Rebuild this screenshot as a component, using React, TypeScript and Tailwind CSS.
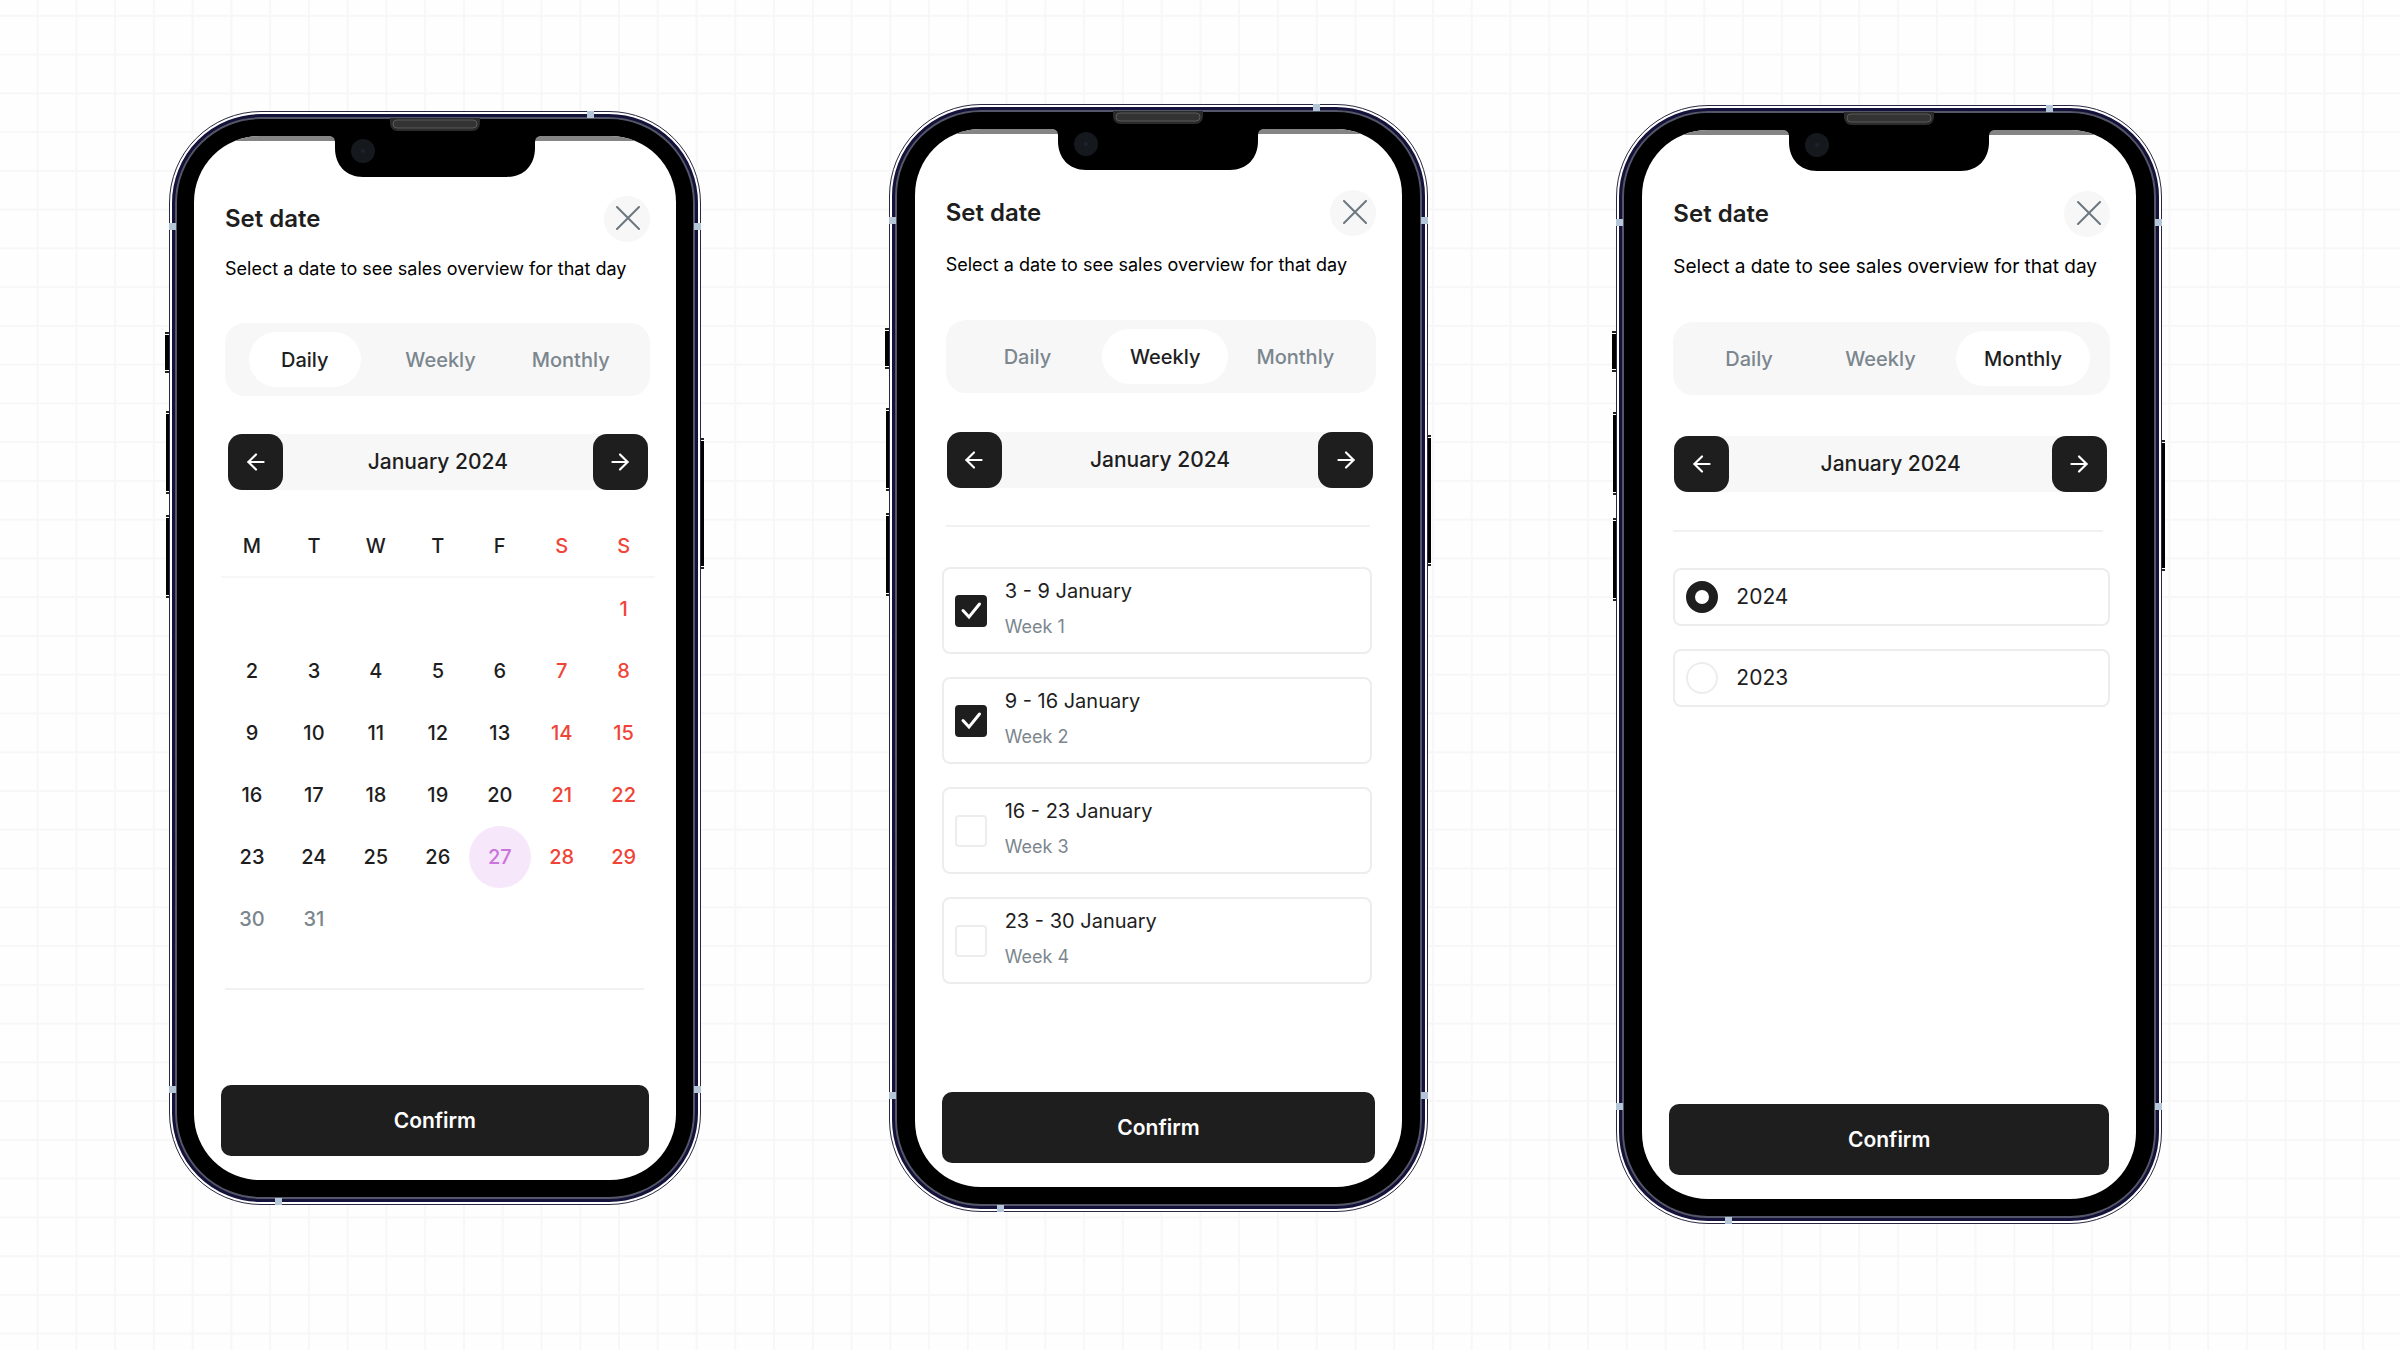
import React, { useState } from "react";
import { ArrowLeft, ArrowRight } from "lucide-react";

type Mode = "Daily" | "Weekly" | "Monthly";

const modes: Mode[] = ["Daily", "Weekly", "Monthly"];

const weekRows: (number | null)[][] = [
  [null, null, null, null, null, null, 1],
  [2, 3, 4, 5, 6, 7, 8],
  [9, 10, 11, 12, 13, 14, 15],
  [16, 17, 18, 19, 20, 21, 22],
  [23, 24, 25, 26, 27, 28, 29],
  [30, 31, null, null, null, null, null],
];

const weekDays = [
  ["M", "Monday"],
  ["T", "Tuesday"],
  ["W", "Wednesday"],
  ["T", "Thursday"],
  ["F", "Friday"],
  ["S", "Saturday"],
  ["S", "Sunday"],
];

const weeks = [
  { range: "3 - 9 January", label: "Week 1", picked: true },
  { range: "9 - 16 January", label: "Week 2", picked: true },
  { range: "16 - 23 January", label: "Week 3", picked: false },
  { range: "23 - 30 January", label: "Week 4", picked: false },
];

function GridPaper() {
  return (
    <svg className="absolute inset-0 -z-10 h-full w-full" aria-hidden="true">
      <defs>
        <pattern id="grid-paper" x="36.6" y="14.8" width="38.76" height="38.76" patternUnits="userSpaceOnUse">
          <path d="M1 0V38.76M0 1H38.76" stroke="#f7f7f7" strokeWidth="2" fill="none" />
        </pattern>
      </defs>
      <rect width="100%" height="100%" fill="url(#grid-paper)" />
    </svg>
  );
}

function SideKey({ className }: { className: string }) {
  return (
    <span aria-hidden="true" className={`absolute flex w-1 border-y-2 border-[#222] bg-white py-px ${className}`}>
      <span className="flex-1 bg-black" />
    </span>
  );
}

function AntennaBand({ className }: { className: string }) {
  return <span aria-hidden="true" className={`absolute h-[7px] w-[7px] bg-[#b4c6d8] ${className}`} />;
}

function Notch() {
  return (
    <div aria-hidden="true" className="absolute inset-x-0 top-0">
      <div className="h-[70px] overflow-hidden rounded-t-[66px]">
        <div className="h-[5px] bg-[#858585]" />
      </div>
      <svg viewBox="0 0 212 42" className="absolute left-1/2 top-0 h-[42px] w-[212px] -translate-x-1/2">
        <path d="M0 0C4 0 6 2 6 7V12C6 29 17 41 34 41H178C195 41 206 29 206 12V7C206 2 208 0 212 0Z" fill="#000" />
        <circle cx="34" cy="15" r="12" fill="#15191d" />
        <circle cx="34" cy="15" r="2" fill="#1d2430" />
      </svg>
      <svg viewBox="0 0 90 14" className="absolute -top-[18px] left-1/2 h-[14px] w-[90px] -translate-x-1/2">
        <path d="M0 0H90V4C90 10 87 13 82 13H8C3 13 0 10 0 4Z" fill="#2b2b2b" />
        <rect x="3" y="2" width="84" height="8" rx="4" fill="#333" stroke="#5a5a5a" />
      </svg>
    </div>
  );
}

type FrameProps = { className: string; bezel: string; screen: string; children: React.ReactNode };

function PhoneFrame({ className, bezel, screen, children }: FrameProps) {
  return (
    <section className={`relative flex ${className}`}>
      <SideKey className="-left-1 top-[20.2%] h-[41px]" />
      <SideKey className="-left-[3px] top-[27.4%] h-[83px]" />
      <SideKey className="-left-[3px] top-[36.9%] h-[83px]" />
      <SideKey className="-right-[3px] top-[29.9%] h-[131px]" />
      <div className="relative flex flex-1 rounded-[92px] border border-[#2a2840] bg-white p-[2px]">
        <div className="flex flex-1 rounded-[89px] border-[3px] border-[#14123a] bg-black">
          <div className={`flex flex-1 rounded-[86px] border-2 border-[#54566a] bg-black py-[17px] ${bezel}`}>
            <div className={`relative flex flex-1 flex-col rounded-[66px] bg-white pb-6 ${screen}`}>
              <Notch />
              {children}
            </div>
          </div>
        </div>
      </div>
      <AntennaBand className="right-[20%] top-0" />
      <AntennaBand className="left-0 top-[10.2%]" />
      <AntennaBand className="right-0 top-[10.2%]" />
      <AntennaBand className="bottom-[10.2%] left-0" />
      <AntennaBand className="bottom-[10.2%] right-0" />
      <AntennaBand className="bottom-0 left-[20%]" />
    </section>
  );
}

function Tabs({ initial, className }: { initial: Mode; className: string }) {
  const [active, setActive] = useState<Mode>(initial);
  return (
    <div role="tablist" className={`flex h-[73px] items-center justify-between rounded-[20px] bg-[#f7f7f7] ${className}`}>
      {modes.map((mode) => (
        <button
          key={mode}
          type="button"
          role="tab"
          aria-selected={active === mode}
          onClick={() => setActive(mode)}
          className={`h-[55px] rounded-full text-[20px] font-medium ${mode === "Daily" ? "px-8" : "px-7"} ${
            mode === "Daily" && initial !== "Monthly" ? "mr-auto" : ""
          } ${active === mode ? "bg-white text-[#1e1e1e]" : "text-[#7b868e]"}`}
        >
          {mode}
        </button>
      ))}
    </div>
  );
}

function MonthNav({ className }: { className: string }) {
  const key = "flex h-14 w-[55px] items-center justify-center rounded-[14px] bg-[#1e1e1e] text-white";
  return (
    <div className={`flex items-center justify-between rounded-[14px] bg-[#f7f7f7] ${className}`}>
      <button type="button" aria-label="Previous month" className={key}>
        <ArrowLeft size={26} strokeWidth={2} />
      </button>
      <span className="text-[21px] font-medium">January 2024</span>
      <button type="button" aria-label="Next month" className={key}>
        <ArrowRight size={26} strokeWidth={2} />
      </button>
    </div>
  );
}

function Calendar() {
  const [selected, setSelected] = useState(27);
  return (
    <table className="-ml-1 mt-[25px] w-[calc(100%+9px)] table-fixed border-collapse text-[20px] font-medium">
      <thead>
        <tr className="h-[62px] border-b-2 border-[#f7f7f7]">
          {weekDays.map(([short, full], i) => (
            <th key={full} scope="col" abbr={full} className={`font-medium ${i > 4 ? "text-[#f04438]" : ""}`}>
              {short}
            </th>
          ))}
        </tr>
      </thead>
      <tbody>
        {weekRows.map((row, r) => (
          <tr key={r} className="h-[62px]">
            {row.map((day, i) => {
              const tone =
                day === selected
                  ? "bg-[#f6e7fb] text-[#cb74dc]"
                  : i > 4
                    ? "text-[#f04438]"
                    : r === 5
                      ? "text-[#7b868e]"
                      : "text-[#1e1e1e]";
              return (
                <td key={i} className="p-0">
                  {day !== null && (
                    <button
                      type="button"
                      onClick={() => setSelected(day)}
                      className={`mx-auto flex h-[62px] w-[62px] items-center justify-center rounded-full ${tone}`}
                    >
                      {day}
                    </button>
                  )}
                </td>
              );
            })}
          </tr>
        ))}
      </tbody>
    </table>
  );
}

function WeekList() {
  return (
    <div className="-ml-1 mr-1 mt-10 flex flex-col gap-[23px]">
      {weeks.map((week) => (
        <label key={week.label} className="flex items-center rounded-lg border-2 border-[#ededed] pb-[14px] pl-[11px] pt-2">
          <span className="relative mr-[18px] mt-[6px] flex h-8 w-8">
            <input
              type="checkbox"
              defaultChecked={week.picked}
              className="peer h-8 w-8 appearance-none rounded border-2 border-[#ededed] bg-white checked:border-[#1e1e1e] checked:bg-[#1e1e1e]"
            />
            <svg
              viewBox="0 0 32 32"
              aria-hidden="true"
              className="pointer-events-none absolute inset-0 hidden h-8 w-8 peer-checked:block"
            >
              <path d="M8 15.500L14 22L24.500 9" fill="none" stroke="#fff" strokeWidth="3" strokeLinecap="round" />
            </svg>
          </span>
          <span className="flex flex-col gap-[11px]">
            <span className="text-[20px] leading-7">{week.range}</span>
            <span className="text-[18px] leading-[22px] text-[#7b868e]">{week.label}</span>
          </span>
        </label>
      ))}
    </div>
  );
}

function YearList() {
  return (
    <div className="mt-9 flex flex-col gap-[23px]">
      {["2024", "2023"].map((year) => (
        <label key={year} className="flex h-[58px] items-center rounded-lg border-2 border-[#ededed] pl-[11px]">
          <input
            type="radio"
            name="year"
            defaultChecked={year === "2024"}
            className="mr-[18px] h-8 w-8 appearance-none rounded-full border-2 border-[#ededed] bg-white checked:border-[9px] checked:border-[#1e1e1e]"
          />
          <span className="text-[21px]">{year}</span>
        </label>
      ))}
    </div>
  );
}

type PhoneProps = {
  frame: string;
  bezel: string;
  screen: string;
  mode: Mode;
  subtitle: string;
  tabs: string;
  nav: string;
  children: React.ReactNode;
};

function Phone({ frame, bezel, screen, mode, subtitle, tabs, nav, children }: PhoneProps) {
  return (
    <PhoneFrame className={frame} bezel={bezel} screen={screen}>
      <div className="flex flex-1 flex-col pl-[31px] pr-[26px]">
        <header>
          <div className="flex items-center justify-between">
            <h2 className="text-[24px] font-semibold leading-8">Set date</h2>
            <button
              type="button"
              aria-label="Close"
              className="flex h-[46px] w-[46px] items-center justify-center rounded-full bg-[#f7f7f7] pb-[2px] pl-[3px] text-[#6c7780]"
            >
              <svg viewBox="0 0 24 24" className="h-6 w-6" aria-hidden="true">
                <path d="M1 1L23 23M23 1L1 23" stroke="currentColor" strokeWidth="2" strokeLinecap="round" />
              </svg>
            </button>
          </div>
          <p className={`whitespace-nowrap leading-6 text-black ${subtitle}`}>
            Select a date to see sales overview for that day
          </p>
        </header>
        <Tabs initial={mode} className={tabs} />
        <MonthNav className={nav} />
        {children}
      </div>
      <div className="px-[27px]">
        <button type="button" className="h-[71px] w-full rounded-[10px] bg-[#1e1e1e] text-[21px] font-semibold text-white">
          Confirm
        </button>
      </div>
    </PhoneFrame>
  );
}

export default function App() {
  return (
    <main className="relative isolate grid min-h-screen grid-cols-[532fr_540fr_546fr] items-start gap-x-[188px] overflow-hidden bg-[#fefefe] pb-[120px] pl-[169px] pr-[238px] pt-[104px] font-['Inter',sans-serif] text-[#1e1e1e]">
      <GridPaper />
      <Phone
        frame="mt-[7px] min-h-[1094px]"
        bezel="px-[17px]"
        screen="pt-[60px]"
        mode="Daily"
        subtitle="mt-[15px] text-[18px]"
        tabs="mt-[42px] pl-6 pr-3"
        nav="mt-[38px] ml-[3px] mr-[2px]"
      >
        <Calendar />
        <hr className="mr-[6px] mt-[38px] border-t-2 border-[#f1f1f1]" />
      </Phone>
      <Phone
        frame="min-h-[1108px]"
        bezel="px-[18px]"
        screen="pt-[61px]"
        mode="Weekly"
        subtitle="mt-[17px] text-[18px]"
        tabs="mt-[43px] pl-[26px] pr-[14px]"
        nav="mt-[39px] ml-px mr-[3px]"
      >
        <hr className="mr-[6px] mt-[37px] border-t-2 border-[#f1f1f1]" />
        <WeekList />
      </Phone>
      <Phone
        frame="mt-px min-h-[1119px]"
        bezel="px-[18px]"
        screen="pt-[61px]"
        mode="Monthly"
        subtitle="mt-[18px] text-[19px]"
        tabs="mt-[43px] px-5"
        nav="mt-[41px] ml-px mr-[3px]"
      >
        <hr className="mr-[7px] mt-[38px] border-t-2 border-[#f1f1f1]" />
        <YearList />
      </Phone>
    </main>
  );
}
